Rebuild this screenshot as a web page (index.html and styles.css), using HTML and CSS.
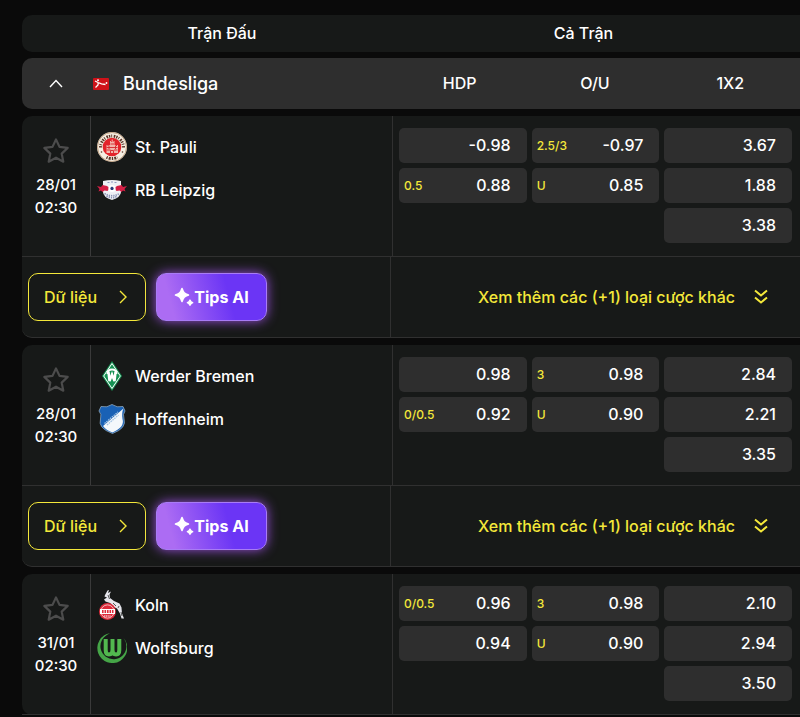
FILE: index.html
```html
<!DOCTYPE html>
<html lang="vi">
<head>
	<meta charset="utf-8">
	<title>Bundesliga</title>
	<link rel="stylesheet" href="styles.css">
</head>
<body>
	<!-- shared icons -->
	<svg class="defs" aria-hidden="true">
		<symbol id="star" viewBox="0 0 28 28">
			<path d="M14 2.4l3.5 7.5 8.2 1-6 5.7 1.6 8.1-7.3-4-7.3 4 1.6-8.1-6-5.7 8.2-1z" fill="none" stroke="#4c4c4c" stroke-width="2.2" stroke-linejoin="round"/>
		</symbol>
		<symbol id="right" viewBox="0 0 10 14">
			<path d="M2 1l6 6-6 6" fill="none" stroke="currentColor" stroke-width="1.4"/>
		</symbol>
		<symbol id="double-down" viewBox="0 0 14 16">
			<path d="M1 1.500l6 5 6-5M1 8.500l6 5 6-5" fill="none" stroke="currentColor" stroke-width="2"/>
		</symbol>
		<symbol id="sparkle" viewBox="0 0 20 20">
			<path d="M8 1.500c1.500 4.300 2.200 5 6.500 6.500-4.300 1.500-5 2.200-6.500 6.500-1.500-4.300-2.200-5-6.500-6.500 4.300-1.500 5-2.200 6.500-6.500z" fill="#fff" stroke="#fff" stroke-width="1.600" stroke-linejoin="round"/>
			<path d="M16 13c.6 1.900 1 2.200 2.700 2.700-1.700.6-2.100.9-2.700 2.700-.6-1.800-1-2.100-2.700-2.700 1.700-.5 2.100-.8 2.700-2.700z" fill="#fff" stroke="#fff" stroke-width="1.300" stroke-linejoin="round"/>
		</symbol>
	</svg>

	<main class="board">
		<div class="titles">
			<div>Trận Đấu</div>
			<div>Cả Trận</div>
		</div>

		<div class="league">
			<div class="league-name">
				<button class="fold" aria-label="Thu gọn">
					<svg width="14" height="9" viewBox="0 0 14 9"><path d="M1 8l6-6.500L13 8" fill="none" stroke="#fff" stroke-width="1.400"/></svg>
				</button>
				<svg class="flag" width="16" height="12" viewBox="0 0 16 12">
					<rect width="16" height="12" rx="1" fill="#cf1219"/>
					<circle cx="5" cy="2.300" r="1" fill="#fff"/>
					<path d="M2 3l3 1.500 3.500 1.300 4 .7M5.200 4.500L5 7 2.500 9.500" fill="none" stroke="#fff" stroke-width="1.300"/>
					<circle cx="13.500" cy="5" r=".9" fill="#fff"/>
				</svg>
				<span>Bundesliga</span>
			</div>
			<div class="markets">
				<span>HDP</span>
				<span>O/U</span>
				<span>1X2</span>
			</div>
		</div>

		<section class="match">
			<div class="top">
				<div class="when">
					<button class="fav" aria-label="Yêu thích"><svg width="28" height="28"><use href="#star"/></svg></button>
					<div>28/01</div>
					<div>02:30</div>
				</div>
				<div class="teams">
					<div class="team">
						<svg class="logo" viewBox="0 0 30 30">
							<circle cx="15" cy="15" r="15" fill="#f5efe3"/>
							<circle cx="15" cy="15" r="14.500" fill="none" stroke="#a9774e" stroke-width=".6"/>
							<path d="M3.500 15.500A11.500 11.500 0 0 1 26.500 15.500" fill="none" stroke="#5a3427" stroke-width="3" stroke-dasharray="1.400 1 .9 1.600 1.600 .9"/>
							<path d="M9.500 25.200A11.500 11.500 0 0 0 20.500 25.200" fill="none" stroke="#5a3427" stroke-width="3" stroke-dasharray="1.300 1.100 2 1.100"/>
							<circle cx="4.500" cy="20" r=".8" fill="#5a3427"/>
							<circle cx="25.500" cy="20" r=".8" fill="#5a3427"/>
							<circle cx="15" cy="15" r="9.300" fill="#e3242b"/>
							<path d="M9.500 21v-8h1v1h1v-1h1.500V9h1v1h.7V7.500h1V10h.8V9h1v4H19v1h1v-1h1v8z" fill="#f3b5ac"/>
							<path d="M9.500 15.500h11M9.500 18h4M17 18h3.500M12 13.500V17M18.500 13.500V17M13.500 12h3.500M13.500 21v-2.500h3V21" fill="none" stroke="#d5262b" stroke-width=".9"/>
						</svg>
						St. Pauli
					</div>
					<div class="team">
						<svg class="logo" viewBox="0 0 30 30">
							<path d="M6 6q9-2 18 0v11q0 5-9 8-9-3-9-8z" fill="#eef0f5"/>
							<path d="M7.500 18.500q7.500 4.500 15 0M9.500 21q5.500 3.500 11 0" fill="none" stroke="#8b93b4" stroke-width="1.700" stroke-dasharray="1.300 1"/>
							<path d="M10.500 7.500h2M14 7h2M17.500 7.500h2" stroke="#8f9bc0" stroke-width="1.200"/>
							<path d="M0 11l4 1 1.500-2 4.500 1 2.500 2-2 3-3-.5-2 1.500-1.500-1.500-2.500 1 1-2.500z" fill="#d51f45"/>
							<path d="M30 11l-4 1-1.500-2-4.500 1-2.500 2 2 3 3-.5 2 1.500 1.500-1.500 2.500 1-1-2.500z" fill="#d51f45"/>
							<circle cx="15" cy="13.500" r="3.600" fill="#fff"/>
							<path d="M15 11.500l1.800 1.400-.7 2.200h-2.200l-.7-2.200z" fill="#2a3c78"/>
						</svg>
						RB Leipzig
					</div>
				</div>
				<div class="odds">
					<button class="odd">-0.98</button>
					<button class="odd"><small>2.5/3</small>-0.97</button>
					<button class="odd">3.67</button>
					<button class="odd"><small>0.5</small>0.88</button>
					<button class="odd"><small>U</small>0.85</button>
					<button class="odd">1.88</button>
					<button class="odd last">3.38</button>
				</div>
			</div>
			<div class="bottom">
				<div class="actions">
					<button class="data">Dữ liệu <svg width="10" height="14"><use href="#right"/></svg></button>
					<button class="tips"><svg width="20" height="20"><use href="#sparkle"/></svg>Tips AI</button>
				</div>
				<a class="more" href="#">Xem thêm các (+1) loại cược khác <svg width="14" height="16"><use href="#double-down"/></svg></a>
			</div>
		</section>

		<section class="match">
			<div class="top">
				<div class="when">
					<button class="fav" aria-label="Yêu thích"><svg width="28" height="28"><use href="#star"/></svg></button>
					<div>28/01</div>
					<div>02:30</div>
				</div>
				<div class="teams">
					<div class="team">
						<svg class="logo" viewBox="0 0 30 30">
							<path d="M15 0l10 15-10 15L5 15z" fill="#159253"/>
							<path d="M15 2.500L23.300 15 15 27.500 6.700 15z" fill="none" stroke="#fff" stroke-width="1"/>
							<path d="M11.500 11l1 9 2.500-6.500L17.500 20l1-9" fill="none" stroke="#fff" stroke-width="2.500"/>
							<path d="M10.500 13q0-4.500 4.500-4.500t4.500 4.500" fill="none" stroke="#fff" stroke-width="2"/>
						</svg>
						Werder Bremen
					</div>
					<div class="team">
						<svg class="logo" viewBox="0 0 30 30">
							<path d="M4 2.500q6 1.500 11-2 5 3.500 11 2l2 4.500q-2.500 3-1 8 3 9-11.500 14.500Q.5 24 3.500 15q1.500-5-1.500-8z" fill="#1961b5"/>
							<path d="M26.500 4.500q-2 4-1 10.500 2.500 8-10 13.500-6.500-2.500-9.500-6.500z" fill="#f4f8fb"/>
							<path d="M4 2.500q6 1.500 11-2 5 3.500 11 2l2 4.500q-2.500 3-1 8 3 9-11.500 14.500Q.5 24 3.500 15q1.500-5-1.500-8z" fill="none" stroke="#8ba6be" stroke-width=".8"/>
							<path d="M7.500 19.500L21 8M10 21L21.500 11" stroke="#9fc2e3" stroke-width="1.300" stroke-dasharray="1.600 .8"/>
						</svg>
						Hoffenheim
					</div>
				</div>
				<div class="odds">
					<button class="odd">0.98</button>
					<button class="odd"><small>3</small>0.98</button>
					<button class="odd">2.84</button>
					<button class="odd"><small>0/0.5</small>0.92</button>
					<button class="odd"><small>U</small>0.90</button>
					<button class="odd">2.21</button>
					<button class="odd last">3.35</button>
				</div>
			</div>
			<div class="bottom">
				<div class="actions">
					<button class="data">Dữ liệu <svg width="10" height="14"><use href="#right"/></svg></button>
					<button class="tips"><svg width="20" height="20"><use href="#sparkle"/></svg>Tips AI</button>
				</div>
				<a class="more" href="#">Xem thêm các (+1) loại cược khác <svg width="14" height="16"><use href="#double-down"/></svg></a>
			</div>
		</section>

		<section class="match">
			<div class="top">
				<div class="when">
					<button class="fav" aria-label="Yêu thích"><svg width="28" height="28"><use href="#star"/></svg></button>
					<div>31/01</div>
					<div>02:30</div>
				</div>
				<div class="teams">
					<div class="team">
						<svg class="logo" viewBox="0 0 30 30">
							<path d="M8 5l2.500-4.500L12 0l-1 3 3-1.500-1.500 3 .5 3.500 4 3 5.500 2.500 2 4 .5 6 2 5h-2.500l-1.500-5-3-5-3-1.500-4-4-4.500-1.500-1.500-2 3-2-2.500-1z" fill="#e6e6ec"/>
							<path d="M11 5l1.500 4M16 13l3 3M22 16l-1 2M24 22l1 4" stroke="#555" stroke-width="1"/>
							<circle cx="10.500" cy="21.500" r="8.500" fill="#dd2a3a"/>
							<circle cx="10.500" cy="21.500" r="6.600" fill="none" stroke="#f2c7ca" stroke-width=".9"/>
							<path d="M3 19h15v5H3z" fill="#fff"/>
							<path d="M5 21.500h11.500" stroke="#dd2a3a" stroke-width="3" stroke-dasharray="1.600 .9"/>
							<path d="M7 26h7" stroke="#fff" stroke-width="1.200" stroke-dasharray="1.200 .6"/>
						</svg>
						Koln
					</div>
					<div class="team">
						<svg class="logo" viewBox="0 0 30 30">
							<path d="M13 .2A15 15 0 1 0 26.500 5 13 13 0 1 1 5 7Q8 2.200 13 .2z" fill="#45a547"/>
							<path d="M8.700 6v11q0 4.500 3.200 4.500 3.600 0 3.600-4.500V6v11q0 4.500 3.600 4.500 3.200 0 3.200-4.500V6" fill="none" stroke="#52b84f" stroke-width="4"/>
						</svg>
						Wolfsburg
					</div>
				</div>
				<div class="odds">
					<button class="odd"><small>0/0.5</small>0.96</button>
					<button class="odd"><small>3</small>0.98</button>
					<button class="odd">2.10</button>
					<button class="odd">0.94</button>
					<button class="odd"><small>U</small>0.90</button>
					<button class="odd">2.94</button>
					<button class="odd last">3.50</button>
				</div>
			</div>
		</section>
	</main>
</body>
</html>
```
FILE: styles.css
```css
* {
	box-sizing: border-box;
}

body {
	margin: 0;
	background: #0a0a0a;
	color: #fff;
	font: 500 16px/23px Inter, "Noto Sans", sans-serif;
}

button {
	padding: 0;
	border: 0;
	background: none;
	color: inherit;
	font: inherit;
	cursor: pointer;
}

svg {
	display: block;
	flex: none;
}

.defs {
	position: absolute;
	width: 0;
	height: 0;
}

.board {
	padding: 15px 0 0 22px;
}

.titles {
	display: grid;
	grid-template-columns: 400px 1fr;
	align-items: center;
	height: 37px;
	padding-right: 55px;
	border-radius: 10px 0 0 10px;
	background: #171918;
	text-align: center;
}

.league {
	display: grid;
	grid-template-columns: 370px 1fr;
	align-items: center;
	height: 51px;
	margin: 6px 0 7px;
	border-radius: 10px 0 0 10px;
	background: #2e2e2e;
}

.league-name {
	display: flex;
	align-items: center;
	font-size: 18px;
}

.fold {
	padding: 8px 0 8px 27px;
}

.flag {
	margin: 0 14px 0 30px;
}

.markets {
	display: grid;
	grid-template-columns: repeat(3, 1fr);
	padding-right: 2px;
	text-align: center;
}

.match {
	margin-bottom: 7px;
	border-radius: 10px 0 0 10px;
	background: #171918;
}

.match:last-child {
	margin-bottom: 0;
}

.top {
	display: grid;
	grid-template-columns: 69px 302px 1fr;
	height: 141px;
	border-bottom: 1px solid #303030;
}

.when {
	border-right: 1px solid #3a3a3a;
	padding-top: 21px;
	font-size: 15px;
	text-align: center;
}

.fav {
	margin-bottom: 8px;
}

.teams {
	display: flex;
	flex-direction: column;
	gap: 13px;
	padding: 16px 0 0 6px;
	border-right: 1px solid #303030;
}

.team {
	display: flex;
	align-items: center;
	gap: 8px;
}

.logo {
	width: 30px;
	height: 30px;
}

.odds {
	display: grid;
	grid-template-columns: repeat(3, 1fr);
	grid-auto-rows: 35px;
	gap: 5px;
	padding: 12px 8px 0 6px;
}

.odd {
	display: flex;
	align-items: center;
	justify-content: flex-end;
	padding: 0 16px 0 5px;
	border-radius: 5px;
	background: #2e2e2e;
}

.odd small {
	margin-right: auto;
	color: #f4e83a;
	font-size: 12px;
}

.last {
	grid-column: 3;
}

.bottom {
	display: grid;
	grid-template-columns: 369px 1fr;
	height: 81px;
	border-bottom: 1px solid #303030;
	border-radius: 0 0 0 10px;
}

.actions {
	display: flex;
	align-items: center;
	gap: 10px;
	padding-left: 6px;
	border-right: 1px solid #303030;
}

.data {
	display: flex;
	align-items: center;
	justify-content: space-between;
	width: 118px;
	height: 48px;
	padding: 0 17px 0 15px;
	border: 1px solid #f4e83a;
	border-radius: 10px;
	color: #f4e83a;
}

.tips {
	display: flex;
	align-items: center;
	justify-content: center;
	width: 111px;
	height: 48px;
	border: 1px solid #a87cf5;
	border-radius: 10px;
	background: linear-gradient(75deg, #ac6cf3 15%, #6b35f5 65%);
	box-shadow: 0 0 12px #9a4fdc;
	font-weight: 700;
}

.more {
	display: flex;
	align-items: center;
	justify-content: flex-end;
	gap: 19px;
	padding-right: 32px;
	color: #f4e83a;
	text-decoration: none;
}
```
